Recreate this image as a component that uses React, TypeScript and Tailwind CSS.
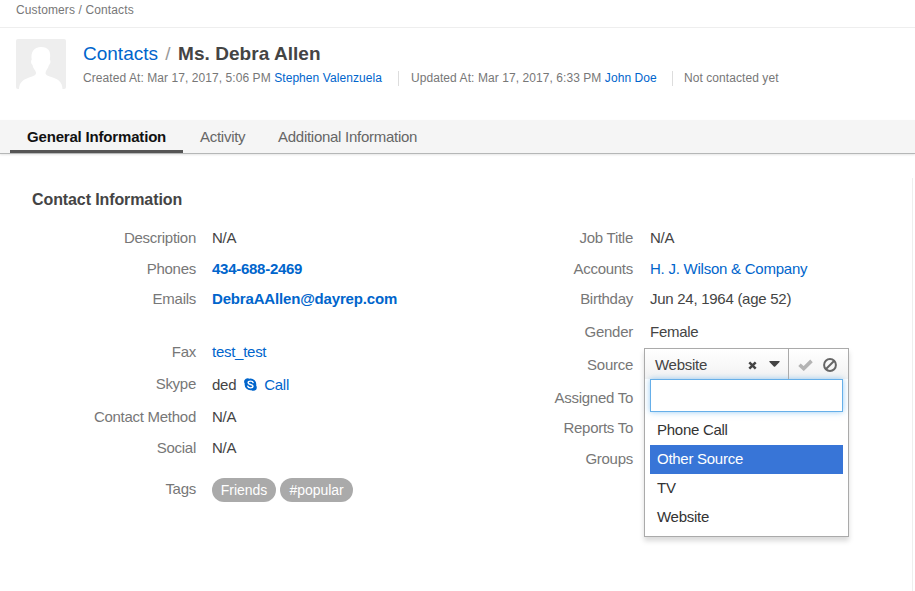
import type { ReactNode } from "react";

type RowProps = { label: string; height: string; children?: ReactNode };

function Row({ label, height, labelWidth, gap, children }: RowProps & { labelWidth: string; gap: string }) {
  return (
    <div className={`flex items-start ${gap} ${height}`}>
      <div className={`${labelWidth} shrink-0 text-right text-[#777]`}>{label}</div>
      <div className="flex items-start whitespace-nowrap text-[#444]">{children}</div>
    </div>
  );
}

const LeftRow = (p: RowProps) => <Row labelWidth="w-[196px]" gap="gap-4" {...p} />;
const RightRow = (p: RowProps) => <Row labelWidth="w-[176px]" gap="gap-[17px]" {...p} />;

function Avatar() {
  return (
    <svg width="50" height="50" viewBox="0 0 50 50" className="shrink-0">
      <rect width="50" height="50" rx="2" fill="#eeeeee" />
      <path
        d="M3 50C3.500 43 7 41 12 39C17 37 20 36.500 20 34C20 31.500 17 29.500 16.500 26C15 25 14.500 22 15.700 20.500C14.500 13 18 8 25 8C32 8 35.500 12 33.800 20.500C35 22 34.500 25 33 26C32 29.500 29.500 31.500 29.500 34C29.500 36.500 33 37 38 39C43 41 46 43 46.500 50Z"
        fill="#ffffff"
      />
    </svg>
  );
}

function SkypeIcon() {
  return (
    <svg width="13" height="13" viewBox="0 0 13 13" className="mt-1 ml-[8px]">
      <path
        d="M3.700 .2C4.500 .2 5 .5 5.600 .7A5.800 5.800 0 0 1 12.200 7.400C12.600 8 12.800 8.600 12.800 9.300A3.500 3.500 0 0 1 9.300 12.800C8.600 12.800 8 12.600 7.400 12.200A5.800 5.800 0 0 1 .7 5.600A3.500 3.500 0 0 1 3.700 .2Z"
        fill="#0065cc"
      />
      <path
        d="M9.100 4.500C8.800 3.500 7.800 3.100 6.600 3.100C5.100 3.100 4.100 3.700 4.100 4.800C4.100 7 9 5.900 9 8.100C9 9.300 7.900 9.900 6.500 9.900C5.100 9.900 4.100 9.400 3.800 8.300"
        fill="none"
        stroke="#fff"
        strokeWidth="1.400"
        strokeLinecap="round"
      />
    </svg>
  );
}

function SourceEditor() {
  return (
    <div className="absolute left-[644px] top-[348px] h-[189px] w-[205px] border border-[#aaa] bg-white shadow-[0_4px_5px_rgba(0,0,0,0.15)]">
      <div className="flex h-[30px] bg-linear-to-b from-white to-[#f2f2f2] text-[#444]">
        <div className="flex w-[144px] items-center border-r border-[#aaa] pl-[10px]">
          <span className="mt-[2px] w-[93px]">Website</span>
          <svg width="9" height="9" viewBox="0 0 9 9" className="mt-[3px]">
            <path d="M1.300 1.300L7.700 7.700M7.700 1.300L1.300 7.700" stroke="#444" strokeWidth="2.500" />
          </svg>
          <svg width="11" height="6" viewBox="0 0 11 6" className="ml-[12px]">
            <path d="M.4 0H10.600Q10.900 .6 10.300 1.200L6.200 5.400Q5.500 6 4.800 5.400L.7 1.200Q.1 .6 .4 0Z" fill="#444" />
          </svg>
        </div>
        <div className="flex items-center pl-[9px]">
          <svg width="15" height="12" viewBox="0 0 15 12" className="mt-[2px]">
            <path d="M1.500 5.700L5.700 9.600L13.500 1.900" fill="none" stroke="#b4b4b4" strokeWidth="3.600" />
          </svg>
          <svg width="14" height="14" viewBox="0 0 14 14" className="ml-[10px] mt-px">
            <circle cx="7" cy="7" r="5.900" fill="none" stroke="#666" strokeWidth="2" />
            <path d="M3 11L11 3" stroke="#666" strokeWidth="2" />
          </svg>
        </div>
      </div>
      <input className="ml-[5px] block h-[33px] w-[193px] border border-[#66afe9] bg-white shadow-[0_0_6px_rgba(82,168,236,0.6)] outline-none" />
      <ul className="mt-[4px] px-[5px] leading-[27px] text-[#333]">
        <li className="h-[29px] pl-[7px]">Phone Call</li>
        <li className="h-[29px] bg-[#3875d7] pl-[7px] text-white">Other Source</li>
        <li className="h-[29px] pl-[7px]">TV</li>
        <li className="h-[29px] pl-[7px]">Website</li>
      </ul>
    </div>
  );
}

export default function App() {
  return (
    <div className="relative h-[591px] w-[915px] overflow-hidden bg-white font-['Liberation_Sans',Arial,sans-serif] text-[15px] leading-5 tracking-[-0.27px] text-[#444]">
      <nav className="h-7 border-b border-[#eee] pl-4 text-[12px] tracking-[0.12px] text-[#777]">Customers / Contacts</nav>

      <header className="flex h-[92px] pl-4 pt-[11px]">
        <Avatar />
        <div className="ml-[17px]">
          <h1 className="mt-[3px] flex h-6 items-center whitespace-pre text-[19px] tracking-[0.05px]">
            <a className="w-[75px] tracking-normal text-[#0065cc]">Contacts</a>
            <span className="w-5 text-center text-[#999]">/</span>
            <b>Ms. Debra Allen</b>
          </h1>
          <div className="mt-[2px] flex h-5 items-center whitespace-nowrap text-[12px] tracking-[0.07px] text-[#777]">
            <div className="w-[315px]">Created At: Mar 17, 2017, 5:06 PM <a className="text-[#0065cc]">Stephen Valenzuela</a></div>
            <div className="h-[15px] w-px bg-[#ddd]" />
            <div className="w-[273px] pl-[12px]">Updated At: Mar 17, 2017, 6:33 PM <a className="text-[#0065cc]">John Doe</a></div>
            <div className="h-[15px] w-px bg-[#ddd]" />
            <div className="pl-[11px]">Not contacted yet</div>
          </div>
        </div>
      </header>

      <div className="flex h-[34px] border-b border-[#b5b7b7] bg-[#f5f5f5] pl-[10px] leading-[34px] text-[#666] shadow-[0_1px_2px_rgba(0,0,0,0.1)]">
        <div className="h-[33px] w-[173px] border-b-3 border-[#555] pl-[17px] font-bold tracking-[-0.18px] text-[#111]">General Information</div>
        <div className="w-[95px] pl-[17px]">Activity</div>
        <div>Additional Information</div>
      </div>

      <main className="mt-6 mr-[2px] h-[413px] border-r border-[#eee]">
        <h2 className="h-[50px] pl-8 pt-[12px] text-[16px] font-bold tracking-[-0.1px]">Contact Information</h2>
        <div className="flex">
          <section className="w-[457px]">
            <LeftRow label="Description" height="h-[31px]">N/A</LeftRow>
            <LeftRow label="Phones" height="h-[30px]"><b className="text-[#0065cc]">434-688-2469</b></LeftRow>
            <LeftRow label="Emails" height="h-[53px]"><b className="tracking-[-0.17px] text-[#0065cc]">DebraAAllen@dayrep.com</b></LeftRow>
            <LeftRow label="Fax" height="h-[32px]"><a className="text-[#0065cc]">test_test</a></LeftRow>
            <LeftRow label="Skype" height="h-[33px]">
              <span className="mt-px">ded</span>
              <SkypeIcon />
              <a className="ml-[7px] mt-px text-[#0065cc]">Call</a>
            </LeftRow>
            <LeftRow label="Contact Method" height="h-[31px]">N/A</LeftRow>
            <LeftRow label="Social" height="h-[41px]">N/A</LeftRow>
            <LeftRow label="Tags" height="h-[30px]">
              <span className="mt-[-1px] flex gap-1 text-center text-[14px] leading-6 tracking-[-0.04px] text-white">
                <span className="w-[64px] rounded-full bg-[#aaa]">Friends</span>
                <span className="w-[73px] rounded-full bg-[#aaa]">#popular</span>
              </span>
            </LeftRow>
          </section>
          <section>
            <RightRow label="Job Title" height="h-[31px]">N/A</RightRow>
            <RightRow label="Accounts" height="h-[30px]"><a className="tracking-[-0.24px] text-[#0065cc]">H. J. Wilson &amp; Company</a></RightRow>
            <RightRow label="Birthday" height="h-[33px]">Jun 24, 1964 (age 52)</RightRow>
            <RightRow label="Gender" height="h-[33px]">Female</RightRow>
            <RightRow label="Source" height="h-[33px]" />
            <RightRow label="Assigned To" height="h-[30px]" />
            <RightRow label="Reports To" height="h-[31px]" />
            <RightRow label="Groups" height="h-[31px]" />
          </section>
        </div>
      </main>
      <SourceEditor />
    </div>
  );
}
